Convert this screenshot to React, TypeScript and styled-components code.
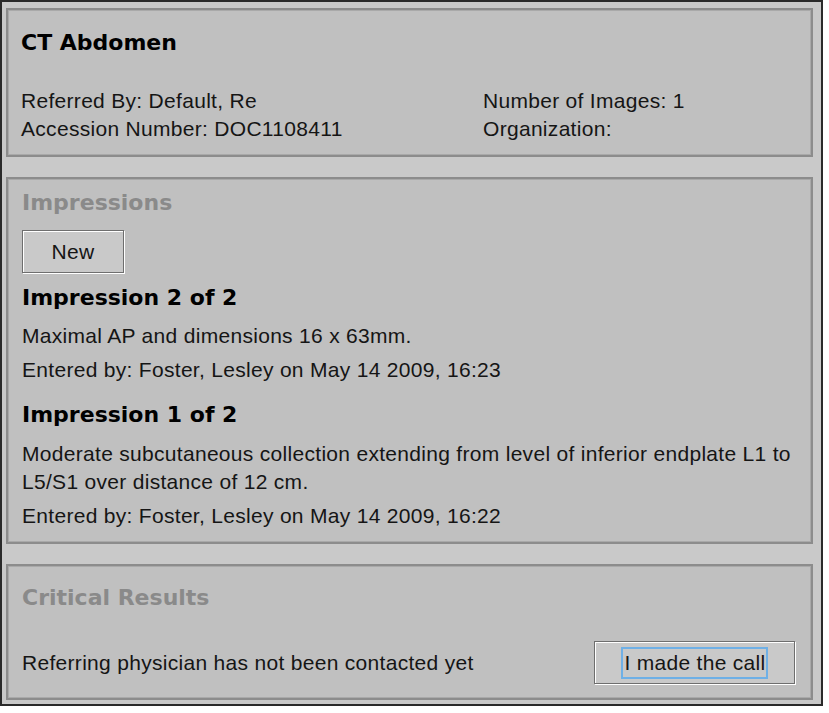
import React from "react";
import styled, { createGlobalStyle } from "styled-components";

const GlobalStyle = createGlobalStyle`
    body {
        margin: 0;
        background: #ffffff;
        font-family: "Liberation Sans", Arial, sans-serif;
    }
`

const Window = styled.div`
    box-sizing: border-box;
    width: 823px;
    height: 706px;
    border: 2px solid #2a2a2a;
    background: #c9c9c9;
    padding: 6px 8px 0 4px;
    display: flex;
    flex-direction: column;
    gap: 20px;
`

const Panel = styled.section<{ $pad: string }>`
    background: #c0c0c0;
    border: 2px solid #8c8c8c;
    box-shadow: inset 0 0 0 1px #a9a9a9;
    padding: ${p => p.$pad};
    display: flex;
    flex-direction: column;
`

const Title = styled.h1<{ $muted?: boolean }>`
    margin: 0;
    font-family: "DejaVu Sans", "Liberation Sans", sans-serif;
    font-weight: bold;
    font-size: 22px;
    line-height: 28px;
    color: ${p => (p.$muted ? "#8a8a8a" : "#000000")};
`

const Text = styled.div<{ $top?: number }>`
    font-size: 21px;
    line-height: 28px;
    letter-spacing: 0.3px;
    color: #151515;
    margin-top: ${p => p.$top ?? 0}px;
`

const InfoGrid = styled.div`
    display: grid;
    grid-template-columns: 462px 1fr;
    margin-top: 30px;
`

const Button = styled.button<{ $w: number }>`
    width: ${p => p.$w}px;
    height: 43px;
    background: #c9c9c9;
    border: 1px solid #6e6e6e;
    box-shadow: 1px 1px 0 #ffffff, inset 1px 1px 0 #ffffff;
    font-family: "Liberation Sans", Arial, sans-serif;
    font-size: 21px;
    letter-spacing: 0.3px;
    color: #151515;
    padding: 0;
    display: flex;
    align-items: center;
    justify-content: center;
`

const Focus = styled.span`
    border: 2px solid #6fb0e6;
    padding: 2px 0 2px 1px;
    line-height: 24px;
`

const Impression = styled.div<{ $top: number }>`
    margin-top: ${p => p.$top}px;
`

const CallRow = styled.div`
    display: flex;
    align-items: center;
    justify-content: space-between;
    margin-top: 29px;
`

const impressions = [
    {
        title: "Impression 2 of 2",
        body: "Maximal AP and dimensions 16 x 63mm.",
        gap: 10,
        entered: "Entered by: Foster, Lesley on May 14 2009, 16:23",
    },
    {
        title: "Impression 1 of 2",
        body: "Moderate subcutaneous collection extending from level of inferior endplate L1 to L5/S1 over distance of 12 cm.",
        gap: 11,
        entered: "Entered by: Foster, Lesley on May 14 2009, 16:22",
    },
]

export default function App() {
    return (
        <>
            <GlobalStyle />
            <Window>
                <Panel $pad="19px 13px 12px 13px">
                    <Title>CT Abdomen</Title>
                    <InfoGrid>
                        <Text>Referred By: Default, Re</Text>
                        <Text>Number of Images: 1</Text>
                        <Text>Accession Number: DOC1108411</Text>
                        <Text>Organization:</Text>
                    </InfoGrid>
                </Panel>

                <Panel $pad="10px 10px 12px 14px">
                    <Title $muted>Impressions</Title>
                    <Button $w={102} style={{ marginTop: 13 }}>New</Button>
                    {impressions.map((imp, i) => (
                        <Impression key={imp.title} $top={i === 0 ? 11 : 17}>
                            <Title>{imp.title}</Title>
                            <Text $top={imp.gap}>{imp.body}</Text>
                            <Text $top={6}>{imp.entered}</Text>
                        </Impression>
                    ))}
                </Panel>

                <Panel $pad="18px 16px 14px 14px">
                    <Title $muted>Critical Results</Title>
                    <CallRow>
                        <Text>Referring physician has not been contacted yet</Text>
                        <Button $w={201}>
                            <Focus>I made the call</Focus>
                        </Button>
                    </CallRow>
                </Panel>
            </Window>
        </>
    )
}
